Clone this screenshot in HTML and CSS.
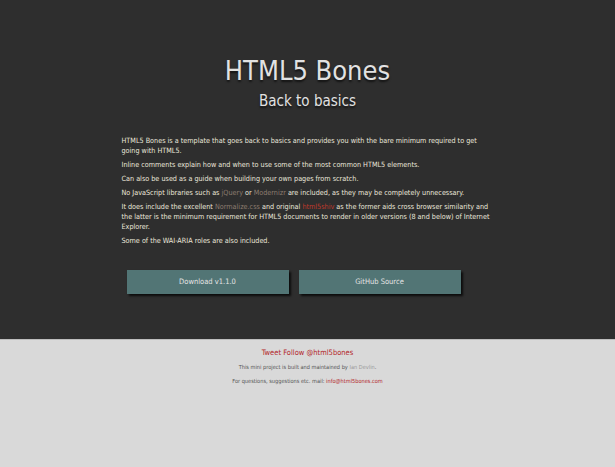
FILE: index.html
```html
<!DOCTYPE html>
<html lang="en">
<head>
  <meta charset="UTF-8">
  <meta name="viewport" content="width=device-width, initial-scale=1.0">
  <title>HTML5 Bones</title>
  <link rel="stylesheet" href="styles.css">
</head>
<body>

<div class="page">
  <header class="masthead">
    <h1>HTML5 Bones</h1>
    <h2>Back to basics</h2>
  </header>

  <main class="intro">
    <p>HTML5 Bones is a template that goes back to basics and provides you with the bare minimum required to get going with HTML5.</p>
    <p>Inline comments explain how and when to use some of the most common HTML5 elements.</p>
    <p>Can also be used as a guide when building your own pages from scratch.</p>
    <p>No JavaScript libraries such as <a class="muted" href="#">jQuery</a> or <a class="muted" href="#">Modernizr</a> are included, as they may be completely unnecessary.</p>
    <p>It does include the excellent <a class="muted" href="#">Normalize.css</a> and original <a class="hot" href="#">html5shiv</a> as the former aids cross browser similarity and the latter is the minimum requirement for HTML5 documents to render in older versions (8 and below) of Internet Explorer.</p>
    <p>Some of the WAI-ARIA roles are also included.</p>

    <div class="actions">
      <a class="btn" href="#">Download v1.1.0</a>
      <a class="btn" href="#">GitHub Source</a>
    </div>
  </main>
</div>

<footer class="footer">
  <p class="tweet"><a href="#">Tweet</a> <a href="#">Follow @html5bones</a></p>
  <p>This mini project is built and maintained by <a class="author" href="#">Ian Devlin</a>.</p>
  <p>For questions, suggestions etc. mail: <a href="#">info@html5bones.com</a></p>
</footer>

</body>
</html>
```

FILE: styles.css
```css
/* Page base */
body {
  margin: 0;
  background: #d9d9d9;
  font-family: 'DejaVu Sans Condensed', 'DejaVu Sans', sans-serif;
}

a {
  text-decoration: none;
}

/* Dark top part */
.page {
  background: #2e2e2e;
  height: 340px;
  border-bottom: 1px solid #bdbdbd;
  box-sizing: border-box;
  padding-top: 54px;
}

.masthead {
  text-align: center;
  color: #e2e2e2;
  text-shadow: 0 2px 2px rgba(0, 0, 0, 0.6);
}

.masthead h1 {
  font-size: 27px;
  font-weight: normal;
  line-height: 34px;
  margin: 0;
}

.masthead h2 {
  font-size: 15px;
  font-weight: normal;
  line-height: 20px;
  margin: 3px 0 0;
}

/* Intro text */
.intro {
  width: 372px;
  margin: 25px auto 0;
  color: #ece8dc;
  font-size: 7.2px;
  line-height: 10px;
}

.intro p {
  margin: 0 0 4px;
}

.intro .muted {
  color: #8d7d70;
}

.intro .hot {
  color: #c0392b;
}

/* Buttons */
.actions {
  display: flex;
  gap: 10px;
  margin: 24px 0 0 5px;
}

.btn {
  display: block;
  width: 162px;
  height: 24px;
  line-height: 24px;
  text-align: center;
  background: #527575;
  color: #e4e4e4;
  font-size: 7.5px;
  box-shadow: 2px 2px 2px rgba(0, 0, 0, 0.75);
}

/* Footer */
.footer {
  text-align: center;
  color: #555;
  font-size: 5.6px;
  padding-top: 9px;
}

.footer p {
  margin: 0 0 8px;
  line-height: 6px;
}

.footer a {
  color: #b3262a;
}

.footer .tweet {
  font-size: 7.5px;
  line-height: 8px;
  margin-bottom: 7px;
}

.footer .author {
  color: #999;
}
```
